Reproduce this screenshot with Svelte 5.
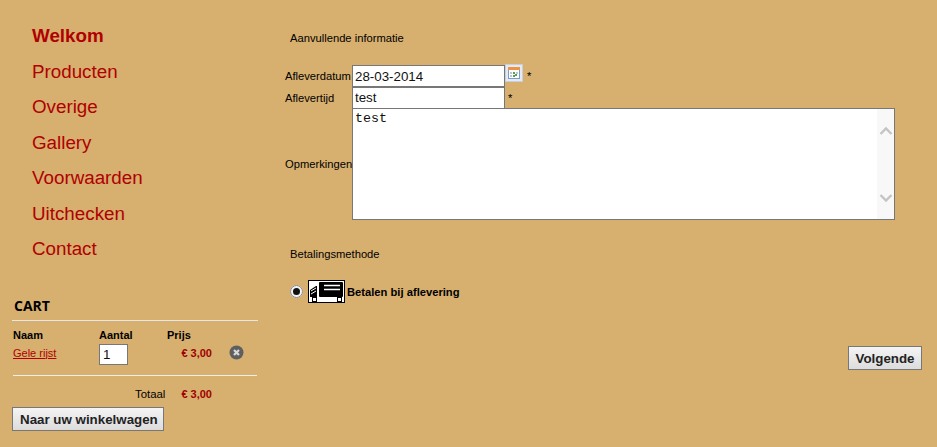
<script>
  let nav = ["Welkom", "Producten", "Overige", "Gallery", "Voorwaarden", "Uitchecken", "Contact"];
</script>

<div class="page">
  <aside class="left">
    <ul class="menu">
      {#each nav as item, i}
        <li class:active={i == 0}><a href="#top">{item}</a></li>
      {/each}
    </ul>

    <div class="cart">
      <h3>CART</h3>
      <div class="cart-row head">
        <span class="c-name">Naam</span>
        <span class="c-qty">Aantal</span>
        <span class="c-price">Prijs</span>
      </div>
      <div class="cart-row item">
        <a class="c-name" href="#top">Gele rijst</a>
        <span class="c-qty"><input class="qty" value="1" /></span>
        <span class="c-price amount">€ 3,00</span>
        <svg class="remove" width="15" height="15" viewBox="0 0 15 15">
          <circle cx="7.5" cy="7.5" r="7" fill="#5f5f5f" />
          <path d="M5 5l5 5M10 5l-5 5" stroke="#d8d8d8" stroke-width="2.2" />
        </svg>
      </div>
      <div class="cart-total">
        <span class="total-label">Totaal</span>
        <span class="amount">€ 3,00</span>
      </div>
      <button class="btn">Naar uw winkelwagen</button>
    </div>
  </aside>

  <main class="right">
    <h4 class="first">Aanvullende informatie</h4>
    <div class="form">
      <label for="datum">Afleverdatum</label>
      <div class="field top">
        <input id="datum" value="28-03-2014" />
        <svg class="cal" width="18" height="18" viewBox="0 0 18 18">
          <rect x="0.5" y="0.5" width="17" height="17" fill="#e4eaf3" stroke="#c6cfdb" />
          <rect x="3.5" y="3.5" width="11" height="11" fill="#fff" stroke="#7d9cc9" />
          <rect x="3" y="3" width="12" height="3" fill="#f0923f" />
          <path d="M5 8h2v2H5zM11 8h2v2h-2zM5 11h2v2H5z" fill="#b9c6da" />
          <path d="M8 8h2v2H8zM10 10h2v2h-2zM8 11h2v2H8z" fill="#57a04f" />
        </svg>
        <span class="star">*</span>
      </div>
      <label for="tijd">Aflevertijd</label>
      <div class="field">
        <input id="tijd" value="test" />
        <span class="star nocal">*</span>
      </div>
      <label for="opm">Opmerkingen</label>
      <div class="area-wrap">
        <textarea id="opm">test</textarea>
        <div class="scroll">
          <svg width="14" height="10" viewBox="0 0 14 10"><path d="M1.5 8L7 2.5 12.5 8" fill="none" stroke="#c4c4c4" stroke-width="2.4" /></svg>
          <svg width="14" height="10" viewBox="0 0 14 10"><path d="M1.5 2L7 7.5 12.5 2" fill="none" stroke="#c4c4c4" stroke-width="2.4" /></svg>
        </div>
      </div>
    </div>

    <h4 class="second">Betalingsmethode</h4>
    <div class="pay">
      <span class="radio"></span>
      <svg class="truck" width="37" height="23" viewBox="0 0 37 23">
        <rect x="0.5" y="0.5" width="36" height="22" fill="#fff" stroke="#000" />
        <rect x="11" y="2" width="24" height="15" rx="1" fill="#000" />
        <path d="M16 5.5h16M16 9.5h16" stroke="#fff" stroke-width="1.4" />
        <path d="M2 17V10l6-4h1v11z" fill="#000" />
        <path d="M3 11l5-3M3 14l5-3" stroke="#fff" />
        <rect x="4.5" y="17.5" width="4" height="4" fill="#fff" stroke="#000" />
        <rect x="29.5" y="17.5" width="4" height="4" fill="#fff" stroke="#000" />
      </svg>
      <span class="pay-label">Betalen bij aflevering</span>
    </div>

    <div class="actions">
      <button class="btn next">Volgende</button>
    </div>
  </main>
</div>

<style>
  :global(body) {
    margin: 0;
    background: #d7af6e;
  }

  .page {
    display: flex;
    height: 447px;
    overflow: hidden;
    background: #d7af6e;
    color: #000;
    font-family: "Liberation Sans", Arial, sans-serif;
    font-size: 11px;
  }

  .left {
    width: 270px;
    flex: none;
  }

  .menu {
    list-style: none;
    margin: 0;
    padding: 18px 0 0 32px;
  }

  .menu li {
    height: 35.5px;
    line-height: 35.5px;
    font-size: 18.8px;
  }

  .menu a {
    color: #b00000;
    text-decoration: none;
  }

  .menu .active {
    font-weight: bold;
  }

  .cart {
    margin: 30.5px 0 0 12px;
    width: 246px;
  }

  h3 {
    margin: 0;
    padding: 0 0 5px 2px;
    height: 18px;
    line-height: 18px;
    font-family: "Open Sans", sans-serif;
    font-size: 14px;
    font-weight: 700;
    border-bottom: 1px solid #e6e6e6;
  }

  .cart-row {
    display: flex;
    align-items: center;
    padding-left: 1px;
    font-size: 11px;
  }

  .head {
    margin-top: 6px;
    height: 15px;
    font-weight: bold;
  }

  .item {
    height: 21px;
  }

  .item a {
    color: #b00000;
  }

  .c-name {
    width: 86px;
  }

  .c-qty {
    width: 68px;
  }

  .c-price {
    width: 57px;
  }

  .item .c-qty {
    align-self: flex-start;
    padding-top: 1.5px;
    height: 0;
  }

  .amount {
    color: #a00000;
    font-weight: bold;
    text-align: right;
  }

  .item .amount {
    width: 46px;
    margin-left: -1px;
  }

  .qty {
    display: block;
    box-sizing: border-box;
    width: 29px;
    height: 21px;
    padding: 0 3px;
    border: 1px solid #777;
    background: #fff;
    font-family: "Liberation Sans", Arial, sans-serif;
    font-size: 13.33px;
    color: #111;
  }

  .remove {
    margin-left: 17px;
  }

  .cart-total {
    margin-top: 12px;
    padding-top: 12px;
    margin-left: 1px;
    width: 244px;
    border-top: 1px solid #eee;
    display: flex;
    justify-content: flex-end;
    gap: 16px;
    padding-right: 45px;
    box-sizing: border-box;
    font-size: 11px;
    line-height: 12px;
  }

  .total-label {
    font-size: 11.4px;
  }

  .btn {
    display: block;
    box-sizing: border-box;
    height: 24px;
    padding: 0 7px;
    border: 1px solid #777;
    background: linear-gradient(#f4f4f4, #dcdcdc);
    color: #222;
    font-family: "Liberation Sans", Arial, sans-serif;
    font-size: 13.33px;
    font-weight: bold;
    white-space: nowrap;
  }

  .cart .btn {
    margin-top: 7px;
    width: 152px;
  }

  .next {
    width: 74px;
    padding: 0;
  }

  .right {
    flex: 1;
    padding-left: 15px;
    padding-right: 15px;
  }

  h4 {
    margin: 0;
    font-size: 11.2px;
    font-weight: normal;
    line-height: 12px;
  }

  .first {
    margin: 32px 0 0 5px;
  }

  .form {
    display: grid;
    grid-template-columns: 67px 1fr;
    margin-top: 21px;
    font-size: 11.2px;
  }

  .form label {
    align-self: center;
  }

  .field {
    display: flex;
    align-items: center;
    height: 21px;
  }

  .field.top {
    height: 22px;
  }

  .field input {
    box-sizing: border-box;
    width: 153px;
    height: 22px;
    padding: 0 2px;
    border: 1px solid #777;
    background: #fff;
    font-family: "Liberation Sans", Arial, sans-serif;
    font-size: 13.33px;
    color: #111;
  }

  .cal {
    margin: -7px 0 0 0;
  }

  .star {
    margin-left: 4px;
    font-size: 11.2px;
  }

  .nocal {
    margin-left: 3px;
  }

  .area-wrap {
    box-sizing: border-box;
    width: 543px;
    height: 112px;
    border: 1px solid #777;
    background: #fff;
    display: flex;
  }

  textarea {
    flex: 1;
    border: 0;
    padding: 2px;
    margin: 0;
    resize: none;
    outline: none;
    background: #fff;
    font-family: "Liberation Mono", "Courier New", monospace;
    font-size: 13.33px;
    color: #111;
  }

  .scroll {
    width: 17px;
    background: #f8f8f8;
    display: flex;
    flex-direction: column;
    justify-content: space-between;
    align-items: center;
    padding: 17px 0 16px;
    box-sizing: border-box;
  }

  .second {
    margin: 28px 0 0 5px;
  }

  .pay {
    display: flex;
    align-items: center;
    margin-top: 20px;
  }

  .radio {
    box-sizing: border-box;
    width: 13px;
    height: 13px;
    margin-left: 5px;
    border-radius: 50%;
    border: 3px solid #f2f2f2;
    outline: 1px solid #888;
    outline-offset: -1px;
    background: #111;
  }

  .truck {
    margin-left: 5px;
  }

  .pay-label {
    margin-left: 2px;
    font-size: 11.2px;
    font-weight: bold;
  }

  .actions {
    display: flex;
    justify-content: flex-end;
    margin-top: 43px;
  }
</style>
